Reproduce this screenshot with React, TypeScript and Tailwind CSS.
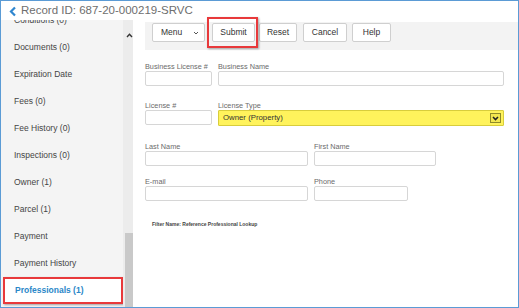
import React from 'react';

const navItems = [
  'Conditions (0)',
  'Documents (0)',
  'Expiration Date',
  'Fees (0)',
  'Fee History (0)',
  'Inspections (0)',
  'Owner (1)',
  'Parcel (1)',
  'Payment',
  'Payment History',
  'Professionals (1)',
];

const Field: React.FC<{ label: string; width: string }> = ({ label, width }) => (
  <div className={`flex flex-col ${width}`}>
    <span className="h-[9px] text-[7.3px] leading-[9px] text-[#6b6b6b]">{label}</span>
    <div className="h-[15px] rounded-[2px] border border-[#d6d6d6] bg-white" />
  </div>
);

const ToolButton: React.FC<{ label: string; className?: string }> = ({ label, className }) => (
  <div
    className={`flex h-[19px] items-center justify-center rounded-[2px] border border-[#cfcfcf] bg-white text-[8.5px] text-[#333] ${className ?? ''}`}
  >
    {label}
  </div>
);

const App: React.FC = () => {
  return (
    <div className="flex h-[308px] w-[519px] flex-col overflow-hidden border border-[#5b9bd5] bg-white font-['Liberation_Sans',Arial,sans-serif]">
      {/* header */}
      <div className="flex h-[19px] shrink-0 items-center pl-[8px]">
        <svg width="8" height="11" viewBox="0 0 8 11" className="mr-[4px] mt-[1px]">
          <polyline points="6,1.5 2,5.5 6,9.5" fill="none" stroke="#2f86cf" strokeWidth="2.2" />
        </svg>
        <span className="text-[11.5px] leading-none text-[#6e6e6e]">Record ID: 687-20-000219-SRVC</span>
      </div>

      <div className="flex min-h-0 flex-1">
        {/* sidebar, scrolled so the first entry is half hidden */}
        <div className="w-[122px] shrink-0 overflow-hidden bg-[#f4f4f4]">
          <ul className="-mt-[13.5px]">
            {navItems.map(item =>
              item === 'Professionals (1)' ? (
                <li
                  key={item}
                  className="ml-[2px] flex h-[27px] items-center border-2 border-[#e8393b] bg-white pl-[10px] text-[8.5px] font-bold text-[#2b87c8] shadow-[1px_1px_2px_rgba(0,0,0,0.35)]"
                >
                  {item}
                </li>
              ) : (
                <li key={item} className="flex h-[27px] items-center pl-[13px] text-[8.5px] text-[#454545]">
                  {item}
                </li>
              )
            )}
          </ul>
        </div>

        {/* scrollbar */}
        <div className="flex w-[10px] shrink-0 flex-col bg-[#ececec]">
          <div className="flex h-[30px] items-center justify-center pl-[2px]">
            <svg width="7" height="5" viewBox="0 0 7 5">
              <polyline points="1,4 3.5,1.3 6,4" fill="none" stroke="#333" strokeWidth="1.4" />
            </svg>
          </div>
          <div className="flex-1" />
          <div className="ml-[2px] h-[74px] w-[8px] bg-[#c9c9c9]" />
        </div>

        {/* main */}
        <div className="flex flex-1 flex-col pl-[12px] pt-[2px]">
          <div className="flex h-[28px] items-start bg-[#f3f3f3] pt-[1px]">
            <div className="ml-[7px] flex h-[19px] w-[53px] items-center rounded-[2px] border border-[#cfcfcf] bg-white pl-[8px] pr-[5px] text-[8.5px] text-[#333]">
              <span className="flex-1">Menu</span>
              <svg width="6" height="4" viewBox="0 0 6 4">
                <polyline points="1,1 3,3 5,1" fill="none" stroke="#555" strokeWidth="1" />
              </svg>
            </div>
            <div className="relative ml-[7px]">
              <ToolButton label="Submit" className="w-[43px]" />
              <div className="absolute -bottom-[6px] -left-[5px] -right-[3px] -top-[6px] border-2 border-[#e8393b] shadow-[1px_1px_2px_rgba(0,0,0,0.35)]" />
            </div>
            <ToolButton label="Reset" className="ml-[4px] w-[38px]" />
            <ToolButton label="Cancel" className="ml-[6px] w-[44px]" />
            <ToolButton label="Help" className="ml-[5px] w-[39px]" />
          </div>

          <div className="mt-[12px] flex gap-[6px]">
            <Field label="Business License #" width="w-[67px]" />
            <Field label="Business Name" width="w-[286px]" />
          </div>

          <div className="mt-[15px] flex gap-[6px]">
            <Field label="License #" width="w-[67px]" />
            <div className="flex w-[286px] flex-col">
              <span className="h-[9px] text-[7.3px] leading-[9px] text-[#6b6b6b]">License Type</span>
              <div className="flex h-[16px] items-center rounded-[1px] border border-[#d8cd3c] bg-[#fff35c] pl-[4px] pr-[2px]">
                <span className="flex-1 text-[7.8px] text-[#333]">Owner (Property)</span>
                <div className="flex h-[10px] w-[11px] items-center justify-center border border-[#8f8a2a] bg-[#f2e64f]">
                  <svg width="7" height="5" viewBox="0 0 7 5">
                    <polyline points="1,1 3.5,3.6 6,1" fill="none" stroke="#222" strokeWidth="1.5" />
                  </svg>
                </div>
              </div>
            </div>
          </div>

          <div className="mt-[16px] flex gap-[6px]">
            <Field label="Last Name" width="w-[163px]" />
            <Field label="First Name" width="w-[122px]" />
          </div>

          <div className="mt-[11px] flex gap-[6px]">
            <Field label="E-mail" width="w-[163px]" />
            <Field label="Phone" width="w-[94px]" />
          </div>

          <div className="mt-[20px] pl-[7px] text-[5px] font-bold leading-[6px] text-[#444]">
            Filter Name: Reference Professional Lookup
          </div>
        </div>
      </div>
    </div>
  );
};

export default App;
